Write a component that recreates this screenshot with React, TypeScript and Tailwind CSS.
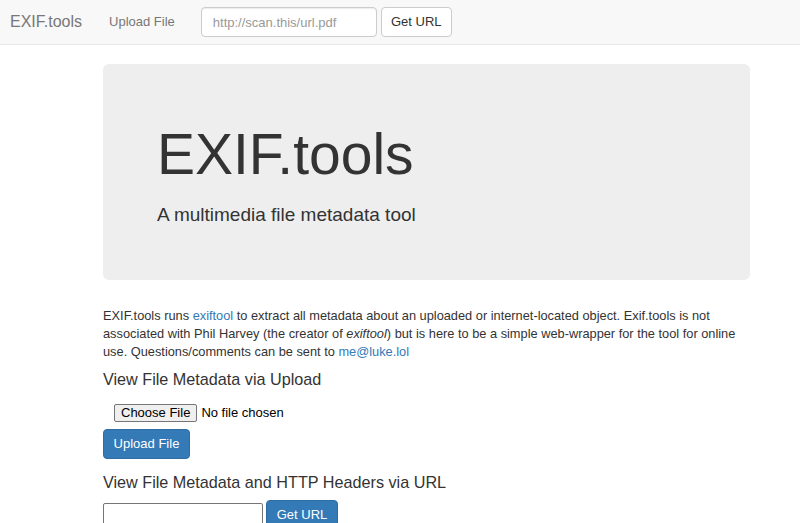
export default function App() {
  return (
    <div className="min-h-[523px] bg-white text-[#333] font-['Liberation_Sans',Arial,sans-serif] text-[13px] leading-[18px]">
      {/* Navbar */}
      <nav className="h-[45px] bg-[#f8f8f8] border-b border-[#e7e7e7] flex items-center">
        <a className="ml-[10px] text-[16px] text-[#777]">EXIF.tools</a>
        <a className="ml-[27px] text-[13px] text-[#777]">Upload File</a>
        <div className="ml-[26px] flex items-center gap-[4px]">
          <input
            className="w-[176px] h-[30px] px-[11px] border border-[#ccc] rounded-[4px] bg-white text-[13px] placeholder:text-[#999] shadow-[inset_0_1px_1px_rgba(0,0,0,0.075)] outline-none"
            placeholder="http://scan.this/url.pdf"
          />
          <button className="w-[71px] h-[30px] border border-[#ccc] rounded-[4px] bg-white text-[13px] text-[#333]">
            Get URL
          </button>
        </div>
      </nav>

      <div className="ml-[103px] w-[647px]">
        {/* Jumbotron */}
        <div className="mt-[19px] h-[216px] bg-[#eee] rounded-[6px] pl-[54px] pt-[58px]">
          <h1 className="text-[57px] leading-[64px] text-[#333]">EXIF.tools</h1>
          <p className="mt-[16px] text-[19px] leading-[26px] text-[#333]">A multimedia file metadata tool</p>
        </div>

        {/* Description */}
        <p className="mt-[27px] text-[12.8px] leading-[18px]">
          EXIF.tools runs <a className="text-[#337ab7]">exiftool</a> to extract all metadata about an uploaded or
          internet-located object. Exif.tools is not associated with Phil Harvey (the creator of{" "}
          <em>exiftool</em>) but is here to be a simple web-wrapper for the tool for online use. Questions/comments
          can be sent to <a className="text-[#337ab7]">me@luke.lol</a>
        </p>

        <h4 className="mt-[9px] text-[16.2px] leading-[18px]">View File Metadata via Upload</h4>
        <div className="mt-[16px] ml-[11px] flex items-center h-[18px]">
          <button className="h-[18px] px-[6px] border border-[#767676] rounded-[2px] bg-[#efefef] text-[13px] leading-[16px] text-black">
            Choose File
          </button>
          <span className="ml-[4px] text-[13px] text-black">No file chosen</span>
        </div>
        <button className="mt-[7px] w-[87px] h-[30px] rounded-[4px] bg-[#337ab7] border border-[#2e6da4] text-white text-[13px]">
          Upload File
        </button>

        <h4 className="mt-[14px] text-[16.2px] leading-[18px]">View File Metadata and HTTP Headers via URL</h4>
        <div className="mt-[9px] flex items-start gap-[3px]">
          <input className="mt-[3px] w-[160px] h-[24px] border border-[#767676] rounded-[2px] bg-white outline-none" />
          <button className="w-[72px] h-[30px] rounded-[4px] bg-[#337ab7] border border-[#2e6da4] text-white text-[13px]">
            Get URL
          </button>
        </div>
      </div>
    </div>
  );
}
